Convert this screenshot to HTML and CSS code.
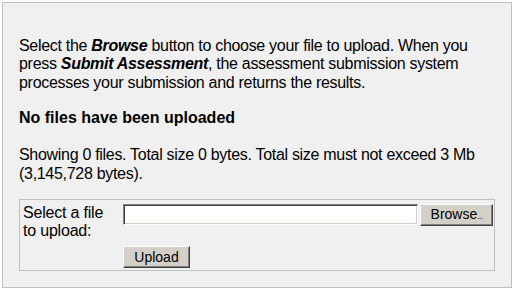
FILE: index.html
```html
<!DOCTYPE html>
<html>
<head>
<meta charset="utf-8">
<link rel="stylesheet" href="styles.css">
</head>
<body>
<div class="panel">
  <p class="intro">Select the <b><i>Browse</i></b> button to choose your file to upload. When you press <b><i>Submit Assessment</i></b>, the assessment submission system processes your submission and returns the results.</p>
  <p class="status">No files have been uploaded</p>
  <p class="summary">Showing 0 files. Total size 0 bytes. Total size must not exceed 3 Mb (3,145,728 bytes).</p>
  <div class="upload-box">
    <label class="upload-label" for="file">Select a file to upload:</label>
    <div class="file-row">
      <input class="file-text" id="file" type="text">
      <button class="btn btn-browse" type="button">Browse<span class="dots">...</span></button>
    </div>
    <div class="submit-row">
      <button class="btn btn-upload" type="button">Upload</button>
    </div>
  </div>
</div>
</body>
</html>
```
FILE: styles.css
```css
html, body {
  margin: 0;
  padding: 0;
  background: #ffffff;
}
body {
  padding: 2px;
  font-family: "Liberation Sans", Arial, sans-serif;
  font-size: 16px;
  color: #000;
}
.panel {
  box-sizing: border-box;
  width: 510px;
  height: 286px;
  border: 1px solid #c0c0c0;
  background: #f0f0f0;
  padding: 18px 16px 16px 16px;
}
.panel .intro {
  margin: 16px 0 0;
  letter-spacing: -0.3px;
  line-height: 18.4px;
}
.panel .status {
  font-weight: bold;
  margin: 17px 0 0;
  line-height: 18.4px;
}
.panel .summary {
  margin: 17px 0 0;
  letter-spacing: -0.3px;
  line-height: 19px;
}
.upload-box {
  margin-top: 16px;
  border: 1px solid #c0c0c0;
  padding: 4px 3px 2px 3px;
  display: grid;
  grid-template-columns: 100px auto;
  row-gap: 5px;
  align-items: start;
}
.upload-label {
  grid-column: 1;
  grid-row: 1;
  max-width: 90px;
  line-height: 18.5px;
  letter-spacing: -0.2px;
}
.file-row {
  grid-column: 2;
  grid-row: 1;
  display: flex;
  gap: 2px;
  align-items: flex-start;
}
.submit-row {
  grid-column: 2;
  grid-row: 2;
}
.file-text {
  box-sizing: border-box;
  width: 295px;
  height: 21px;
  margin: 0;
  padding: 0 2px;
  background: #fff;
  border: 1px solid;
  border-color: #808080 #ffffff #ffffff #808080;
  box-shadow: inset 1px 1px 0 #404040, inset -1px -1px 0 #d4d0c8;
  font: 14px "Liberation Sans", Arial, sans-serif;
  outline: none;
}
.btn {
  box-sizing: border-box;
  height: 22px;
  margin: 0;
  padding: 0;
  background: #d4d0c8;
  border: 1px solid;
  border-color: #ffffff #404040 #404040 #ffffff;
  box-shadow: inset -1px -1px 0 #808080;
  font: 14px "Liberation Sans", Arial, sans-serif;
  color: #000;
  line-height: 18px;
}
.btn-browse {
  width: 73px;
}
.dots {
  font-size: 8px;
  letter-spacing: -0.5px;
}
.btn-upload {
  width: 67px;
}
```
